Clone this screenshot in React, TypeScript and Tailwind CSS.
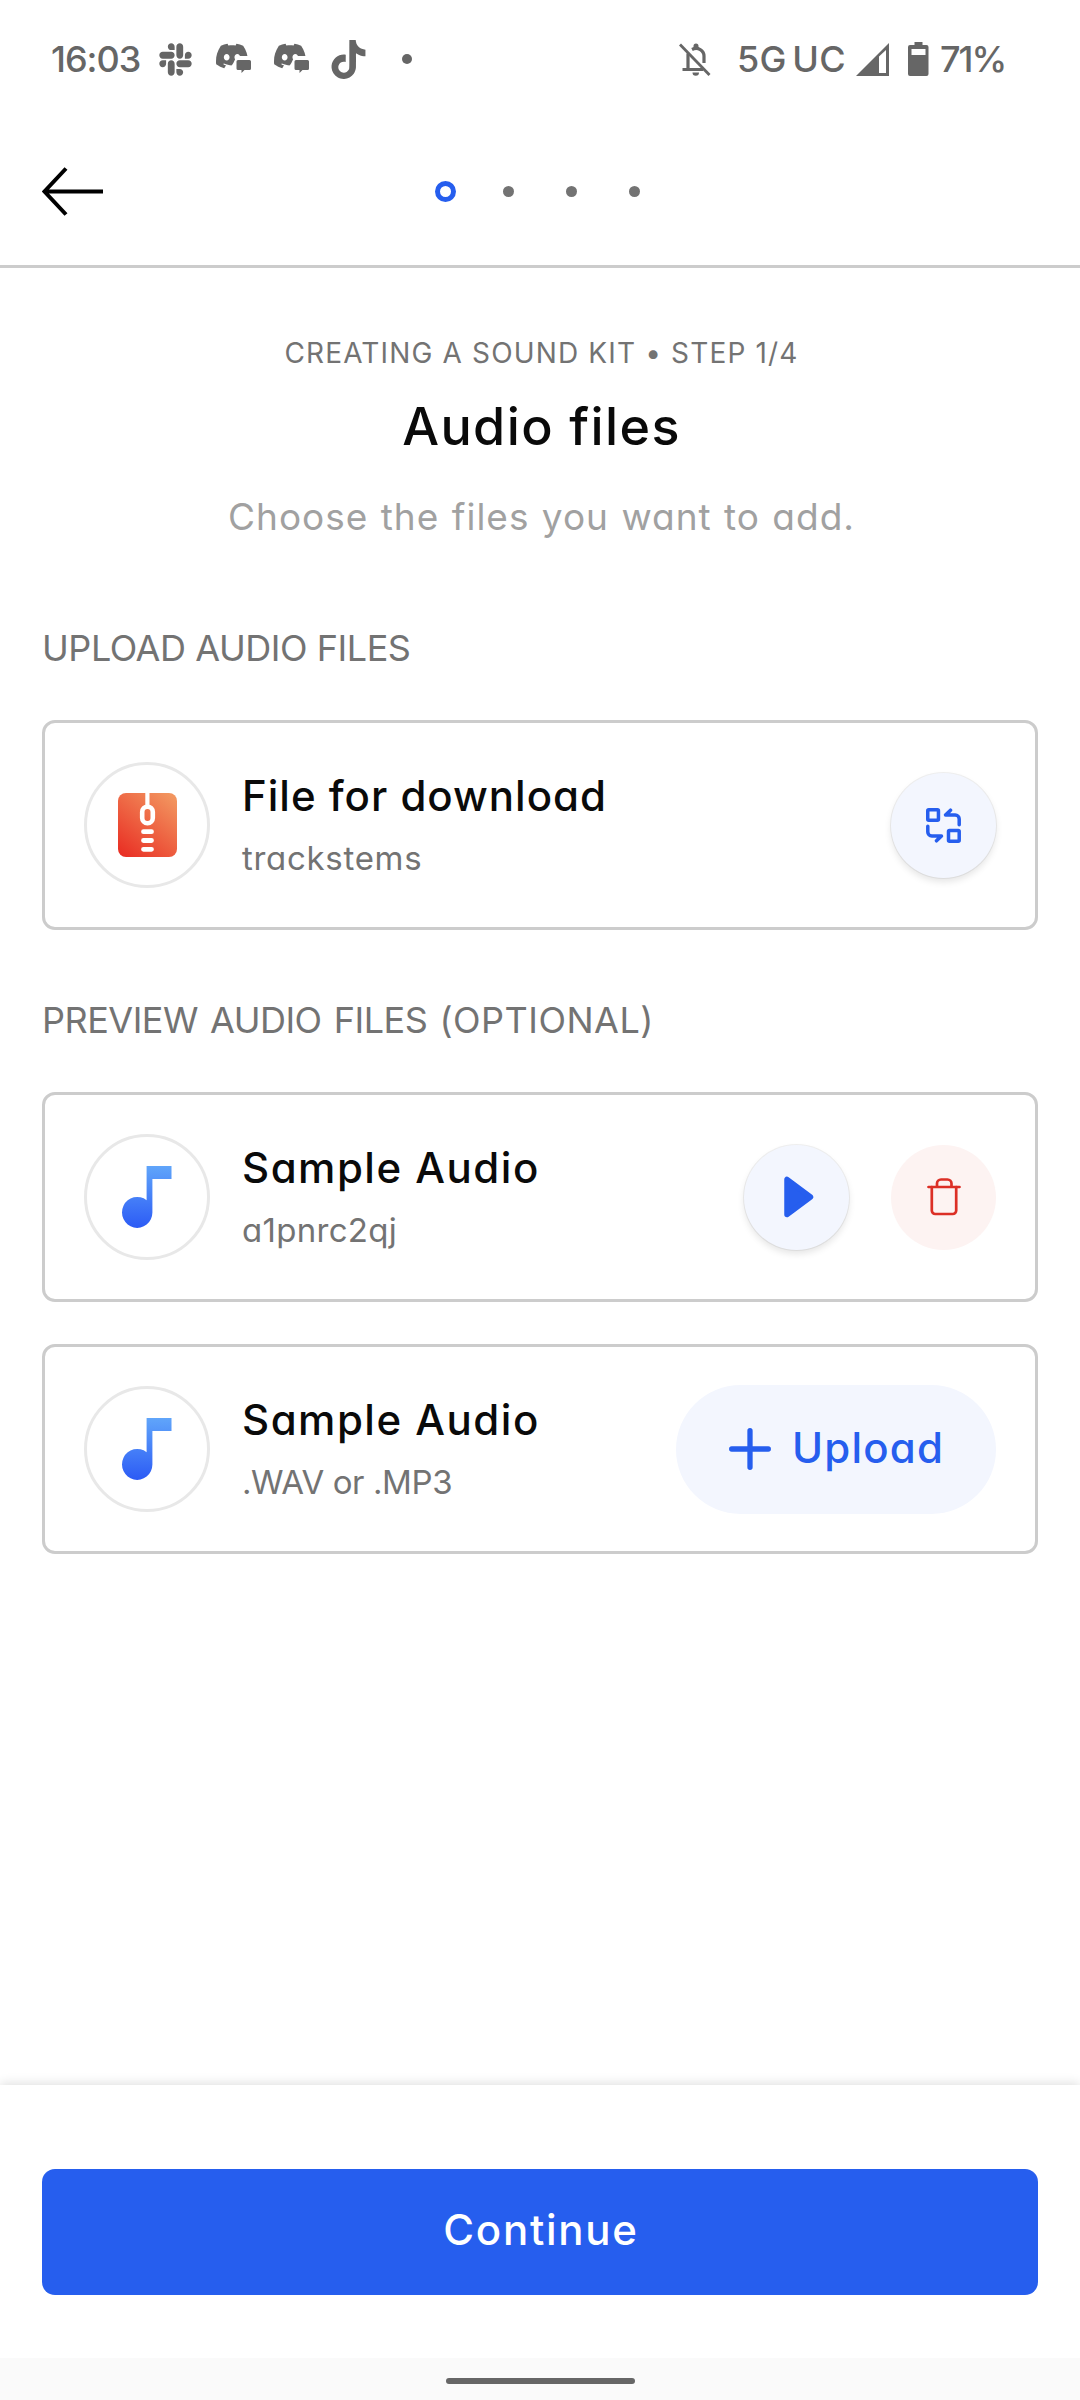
import React from "react";
import { FaSlack } from "react-icons/fa";
import { SiDiscord, SiTiktok } from "react-icons/si";

// discord logo with a small chat bubble over its lower right corner
const DiscordChatIcon: React.FC = () => (
  <svg width="35" height="32" viewBox="0 0 35 32" className="shrink-0">
    <SiDiscord x={0} y={-3} size={32} />
    <path d="M15 32 V23.5 Q17.5 20.5 19 16.5 Q20.5 13 24 13 H35 V32z" fill="#fff" />
    <path
      d="M22 17h11.5a1.5 1.5 0 0 1 1.5 1.5v7a1.5 1.5 0 0 1-1.500 1.500h-5l-3 3v-3h-3.500a1.500 1.500 0 0 1-1.500-1.500v-7a1.500 1.500 0 0 1 1.500-1.500z"
      fill="currentColor"
    />
  </svg>
);

const BellOffIcon: React.FC = () => (
  <svg width="32" height="33" viewBox="0 0 32 33" fill="none" stroke="currentColor">
    <path d="M1 1.5 L30.5 32" strokeWidth="2.8" />
    <path d="M3.5 26.5 H24 M9 10.500 V26.500" strokeWidth="3.2" />
    <path d="M13 6.5 C19 3.5 25 7.5 25 13 V20" strokeWidth="3.2" />
    <path
      d="M14.5 3 a2.5 2.5 0 0 1 5 0 v3 h-5z M13.5 29.5 h6.500 a3.250 3.200 0 0 1 -6.500 0z"
      fill="currentColor"
      stroke="none"
    />
  </svg>
);

const SignalIcon: React.FC = () => (
  <svg width="34" height="33" viewBox="0 0 34 33">
    <path d="M0 33 L33 0 V33z M23 13.5 V30 H30 V7z" fill="currentColor" fillRule="evenodd" />
  </svg>
);

const BatteryIcon: React.FC = () => (
  <svg width="21" height="34" viewBox="0 0 21 34">
    <path
      d="M6.500 0 h8 v3 h4 a2 2 0 0 1 2 2 v27 a2 2 0 0 1-2 2 h-16.500 a2 2 0 0 1-2-2 v-27 a2 2 0 0 1 2-2 h4.500z M3.500 7 v6 h14 v-6z"
      fill="currentColor"
      fillRule="evenodd"
    />
  </svg>
);

const ZipIcon: React.FC = () => (
  <svg width="59" height="64" viewBox="0 0 59 64">
    <defs>
      <linearGradient id="zip" x1="0.1" y1="1" x2="0.85" y2="0">
        <stop offset="0" stopColor="#e92f24" />
        <stop offset="1" stopColor="#f2955f" />
      </linearGradient>
    </defs>
    <rect width="59" height="64" rx="8" fill="url(#zip)" />
    <path d="M29.400 0 V13" stroke="#fff" strokeWidth="4.2" />
    <rect x="24.2" y="13.7" width="10.6" height="16.5" rx="5.2" fill="none" stroke="#fff" strokeWidth="4.6" />
    <path d="M25.5 38.7 h8 M25.5 47.5 h8 M25.5 56.3 h8" stroke="#fff" strokeWidth="4.8" strokeLinecap="round" />
  </svg>
);

const NoteIcon: React.FC = () => (
  <svg width="50" height="62" viewBox="0 0 50 62">
    <defs>
      <linearGradient id="note" x1="0" y1="0" x2="0" y2="1">
        <stop offset="0" stopColor="#60a5fa" />
        <stop offset="1" stopColor="#2c5bf5" />
      </linearGradient>
    </defs>
    <path d="M24.6 0 H49.5 V13 H30.4 V46.5 A15.2 15.5 0 1 1 24.6 34.200z" fill="url(#note)" />
  </svg>
);

const ReplaceIcon: React.FC = () => (
  <svg
    width="35"
    height="35"
    viewBox="0 0 35 35"
    fill="none"
    stroke="currentColor"
    strokeWidth="3.5"
    strokeLinecap="round"
    strokeLinejoin="round"
  >
    <rect x="1.750" y="1.750" width="10.7" height="10.6" rx="1" />
    <rect x="22.5" y="22.6" width="10.7" height="10.6" rx="1" />
    <path d="M33.2 16.8 V11 a4 4 0 0 0-4-4 H19.5 L24.5 2.2" />
    <path d="M1.8 18.2 V24 a4 4 0 0 0 4 4 H15.5 L10.5 32.8" />
    <path d="M19.5 7 L24.5 2.2 L24 7z M15.5 28 L10.5 32.8 L11 28z" fill="currentColor" stroke="none" />
  </svg>
);

const PlayIcon: React.FC = () => (
  <svg width="30" height="42" viewBox="0 0 30 42" className="ml-[5px]">
    <path
      d="M3 3.500 V38.500 L26.500 21z"
      fill="currentColor"
      stroke="currentColor"
      strokeWidth="5.5"
      strokeLinejoin="round"
    />
  </svg>
);

const TrashIcon: React.FC = () => (
  <svg width="34" height="38" viewBox="0 0 34 38" fill="none" stroke="currentColor" strokeWidth="2.7" strokeLinecap="round">
    <path d="M1.5 9 H32.5 M10 9 V5.500 a4 4 0 0 1 4-4 h6.500 a4 4 0 0 1 4 4 V9" />
    <path d="M4.8 9 V32.500 a3.500 3.500 0 0 0 3.500 3.500 h17.400 a3.500 3.500 0 0 0 3.500-3.500 V9" />
  </svg>
);

interface FileCardProps {
  title: string;
  titleClassName: string;
  subtitle: string;
  subtitleClassName: string;
  icon: React.ReactNode;
  children: React.ReactNode;
}

const FileCard: React.FC<FileCardProps> = ({
  title,
  titleClassName,
  subtitle,
  subtitleClassName,
  icon,
  children,
}) => {
  return (
    <div className="flex h-[210px] items-center rounded-[13px] border-3 border-[#cccccc] px-[39px]">
      <div className="flex size-[126px] items-center justify-center rounded-full border-3 border-[#e8e8e8]">
        {icon}
      </div>
      <div className="ml-8 flex flex-1 flex-col gap-2 pb-[2px] whitespace-nowrap">
        <p className={"text-[42px] leading-[60px] font-medium text-[#0a0a0a] " + titleClassName}>{title}</p>
        <p className={"text-[33px] leading-[48px] text-[#737373] " + subtitleClassName}>{subtitle}</p>
      </div>
      <div className="flex items-center gap-[42px]">{children}</div>
    </div>
  );
};

const roundButton = "flex size-[105px] items-center justify-center rounded-full";
const raised = "bg-[#f3f6fe] text-[#265eee] shadow-[0_0_0_1px_rgba(0,0,0,0.06),0_4px_7px_rgba(0,0,0,0.1)]";

export default function App() {
  return (
    <div className="flex h-[2400px] w-[1080px] flex-col bg-white font-['Inter',sans-serif] [font-feature-settings:'cv11']">
      <div className="flex h-[118px] items-center justify-between pr-[75px] pl-[51px] text-[36px] leading-none font-medium whitespace-nowrap text-[#666666]">
        <div className="flex items-center">
          <span className="w-[106px] tracking-[-1px]">16:03</span>
          <FaSlack size={37} />
          <span className="ml-[22px]"><DiscordChatIcon /></span>
          <span className="ml-[23px]"><DiscordChatIcon /></span>
          <SiTiktok size={39} className="ml-[20px]" />
          <span className="ml-[34px] size-[10px] rounded-full bg-[#666666]" />
        </div>
        <div className="flex items-center">
          <BellOffIcon />
          <span className="ml-[26px] w-[109px] tracking-[0.2px] [word-spacing:-4px]">5G UC</span>
          <span className="ml-[10px]"><SignalIcon /></span>
          <span className="ml-[18px]"><BatteryIcon /></span>
          <span className="ml-[11px] w-[65px] tracking-[-2px]">71%</span>
        </div>
      </div>

      <header className="flex h-[150px] items-center border-b-3 border-[#cccccc] px-[42px]">
        <svg width="61" height="50" viewBox="0 0 61 50" fill="none" stroke="#000" strokeWidth="4">
          <path d="M3 24.5 H61 M24 1.5 L2.5 24.5 L24 47.5" />
        </svg>
        <div className="ml-[332px] flex items-center gap-[52px]">
          <span className="-mr-[5px] size-[21px] rounded-full border-[5.5px] border-[#265eee]" />
          <span className="size-[11px] rounded-full bg-[#737373]" />
          <span className="size-[11px] rounded-full bg-[#737373]" />
          <span className="size-[11px] rounded-full bg-[#737373]" />
        </div>
      </header>

      <main className="flex-1 px-[42px] pt-[65px] whitespace-nowrap">
        <div className="pl-[3px] text-center">
          <p className="text-[28px] leading-[40px] tracking-[1.15px] text-[#737373]">CREATING A SOUND KIT • STEP 1/4</p>
          <h1 className="mt-[18px] text-[52px] leading-[72px] font-medium tracking-[1.4px] text-[#0a0a0a]">Audio files</h1>
          <p className="mt-[27px] text-[37px] leading-[54px] tracking-[1px] text-[#a1a1a1] [word-spacing:1px]">
            Choose the files you want to add.
          </p>
        </div>

        <h2 className="mt-[77px] mb-[45px] text-[36px] leading-[54px] tracking-[-0.45px] text-[#737373]">UPLOAD AUDIO FILES</h2>
        <FileCard
          title="File for download"
          titleClassName="tracking-[1px]"
          subtitle="trackstems"
          subtitleClassName="tracking-[0.7px]"
          icon={<ZipIcon />}
        >
          <button className={roundButton + " " + raised}>
            <ReplaceIcon />
          </button>
        </FileCard>

        <h2 className="mt-[63px] mb-[45px] text-[36px] leading-[54px] tracking-[-0.5px] text-[#737373] [word-spacing:2.5px]">
          PREVIEW AUDIO FILES <span className="tracking-[0.5px]">(OPTIONAL)</span>
        </h2>
        <div className="flex flex-col gap-[42px]">
          <FileCard
            title="Sample Audio"
            titleClassName="tracking-[1.5px]"
            subtitle="a1pnrc2qj"
            subtitleClassName="tracking-[0.3px]"
            icon={<NoteIcon />}
          >
            <button className={roundButton + " " + raised}>
              <PlayIcon />
            </button>
            <button className={roundButton + " bg-[#fdf3f2] text-[#dc2f26]"}>
              <TrashIcon />
            </button>
          </FileCard>
          <FileCard
            title="Sample Audio"
            titleClassName="tracking-[1.5px]"
            subtitle=".WAV or .MP3"
            subtitleClassName="tracking-[-0.4px]"
            icon={<NoteIcon />}
          >
            <button className="flex h-[129px] w-[320px] items-center rounded-full bg-[#f3f6fe] pl-[53px] text-[42px] font-medium tracking-[1.2px] text-[#265eee]">
              <svg width="42" height="42" viewBox="0 0 42 42" stroke="currentColor" strokeWidth="5.3" strokeLinecap="round">
                <path d="M21 2.7 V39.3 M2.7 21 H39.3" />
              </svg>
              <span className="ml-[21px] pb-[3px]">Upload</span>
            </button>
          </FileCard>
        </div>
      </main>

      <footer className="h-[273px] bg-white px-[42px] pt-[84px] shadow-[0_-2px_10px_rgba(0,0,0,0.12)]">
        <button className="h-[126px] w-full rounded-[13px] bg-[#265eee] pb-[5px] pl-[2px] text-[42px] font-medium tracking-[1.75px] text-white">
          Continue
        </button>
      </footer>
      <div className="flex h-[42px] justify-center bg-[#fafafa] pt-[20px]">
        <div className="h-[6px] w-[189px] rounded-full bg-[#666666]" />
      </div>
    </div>
  );
}
